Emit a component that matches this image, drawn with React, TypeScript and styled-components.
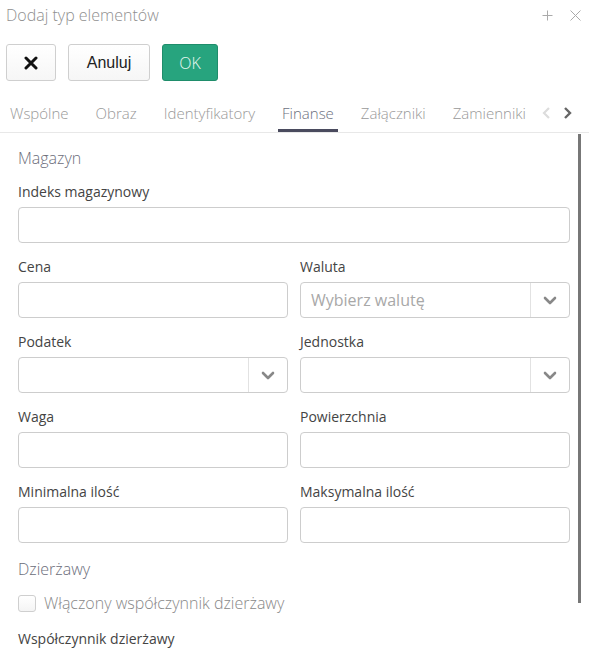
import React from "react";
import styled, { createGlobalStyle } from "styled-components";

const GlobalStyle = createGlobalStyle`
  html, body {
    margin: 0;
    padding: 0;
    background: #fff;
  }
  body {
    font-family: "Open Sans", "Liberation Sans", sans-serif;
  }
`;

const Page = styled.div`
  position: relative;
  width: 589px;
  height: 659px;
  overflow: hidden;
  background: #fff;
`;

const Header = styled.div`
  display: flex;
  align-items: center;
  justify-content: space-between;
  height: 30px;
  padding: 0 8px 0 6px;
`;

const Title = styled.div`
  font-size: 16px;
  font-weight: 300;
  color: #8f8f8f;
  line-height: 30px;
`;

const HeaderIcons = styled.div`
  display: flex;
  align-items: center;
  gap: 17px;
`;

const Toolbar = styled.div`
  display: flex;
  gap: 12px;
  padding: 14px 6px 0;
`;

const Button = styled.button<{ $primary?: boolean; $w: number }>`
  display: flex;
  align-items: center;
  justify-content: center;
  width: ${(p) => p.$w}px;
  height: 37px;
  padding: 0;
  border-radius: 3px;
  border: 1px solid ${(p) => (p.$primary ? "#1f8d6b" : "#cfcfcf")};
  background: ${(p) =>
    p.$primary ? "#27a47e" : "linear-gradient(#ffffff, #f6f6f6)"};
  color: ${(p) => (p.$primary ? "#e8f7f1" : "#222")};
  font-family: ${(p) =>
    p.$primary
      ? `"Open Sans", sans-serif`
      : `"Liberation Sans", Arial, sans-serif`};
  font-weight: ${(p) => (p.$primary ? 300 : 400)};
  font-size: 16px;
`;

const TabBar = styled.div`
  position: relative;
  display: flex;
  gap: 19px;
  margin-top: 14px;
  padding-left: 6px;
  border-bottom: 1px solid #e8e8e8;
  height: 37px;
  overflow: hidden;
  white-space: nowrap;
`;

const Tab = styled.div<{ $active?: boolean }>`
  box-sizing: border-box;
  padding: 8px 4px 0;
  height: 37px;
  line-height: 20px;
  font-size: 15px;
  font-weight: 300;
  color: ${(p) => (p.$active ? "#6c6f7e" : "#999")};
  border-bottom: 3px solid ${(p) => (p.$active ? "#4a4b5e" : "transparent")};
  flex-shrink: 0;
`;

const TabArrows = styled.div`
  position: absolute;
  right: 0;
  top: 0;
  height: 36px;
  width: 62px;
  display: flex;
  align-items: center;
  justify-content: flex-end;
  gap: 12px;
  padding-right: 17px;
  box-sizing: border-box;
  background: linear-gradient(
    to right,
    rgba(255, 255, 255, 0),
    #fff 10px,
    #fff
  );
`;

const Content = styled.div`
  padding: 14px 19px 0 18px;
`;

const SectionTitle = styled.div`
  font-size: 16px;
  font-weight: 300;
  color: #6b6d7a;
  line-height: 22px;
  margin-bottom: 13px;
`;

const Grid = styled.div`
  display: grid;
  grid-template-columns: 1fr 1fr;
  column-gap: 12px;
  row-gap: 14px;
`;

const Field = styled.div<{ $full?: boolean }>`
  display: flex;
  flex-direction: column;
  grid-column: ${(p) => (p.$full ? "1 / -1" : "auto")};
`;

const Label = styled.div`
  font-size: 14px;
  color: #444;
  line-height: 20px;
  margin-bottom: 5px;
`;

const Input = styled.div`
  height: 36px;
  box-sizing: border-box;
  border: 1px solid #cdcdcd;
  border-radius: 4px;
  background: #fff;
`;

const Select = styled(Input)`
  display: flex;
  align-items: center;
`;

const SelectValue = styled.div`
  flex: 1;
  padding-left: 10px;
  font-size: 16px;
  color: #a8a8a8;
`;

const SelectButton = styled.div`
  width: 38px;
  height: 100%;
  border-left: 1px solid #e2e2e2;
  display: flex;
  align-items: center;
  justify-content: center;
`;

const Section2 = styled(SectionTitle)`
  margin-top: 15px;
  margin-bottom: 12px;
`;

const CheckRow = styled.label`
  display: flex;
  align-items: center;
  gap: 8px;
  font-size: 16px;
  font-weight: 300;
  color: #888;
  line-height: 22px;
`;

const Box = styled.span`
  width: 16px;
  height: 15px;
  border: 1px solid #cfcfcf;
  border-radius: 3px;
  background: linear-gradient(#fff, #f4f4f4);
`;

const BottomLabel = styled(Label)`
  margin-top: 15px;
`;

const Scrollbar = styled.div`
  position: absolute;
  left: 578px;
  top: 134px;
  width: 3px;
  height: 469px;
  background: #777;
`;

const Chevron = () => (
  <svg width="14" height="9" viewBox="0 0 14 9">
    <polyline
      points="2,2 7,7 12,2"
      fill="none"
      stroke="#888"
      strokeWidth="2.6"
      strokeLinecap="round"
      strokeLinejoin="round"
    />
  </svg>
);

const Dropdown: React.FC<{ placeholder?: string }> = ({ placeholder }) => (
  <Select>
    <SelectValue>{placeholder}</SelectValue>
    <SelectButton>
      <Chevron />
    </SelectButton>
  </Select>
);

const tabs = [
  "Wspólne",
  "Obraz",
  "Identyfikatory",
  "Finanse",
  "Załączniki",
  "Zamienniki",
];

export default function App() {
  return (
    <Page>
      <GlobalStyle />
      <Header>
        <Title>Dodaj typ elementów</Title>
        <HeaderIcons>
          <svg width="11" height="11" viewBox="0 0 11 11">
            <path d="M5.5 0.5v10M0.5 5.5h10" stroke="#aaa" strokeWidth="1" />
          </svg>
          <svg width="11" height="11" viewBox="0 0 11 11">
            <path d="M0.5 0.5l10 10M10.5 0.5l-10 10" stroke="#aaa" strokeWidth="1" />
          </svg>
        </HeaderIcons>
      </Header>

      <Toolbar>
        <Button $w={50}>
          <svg width="14" height="14" viewBox="0 0 14 14">
            <path
              d="M2 2l10 10M12 2L2 12"
              stroke="#111"
              strokeWidth="3"
              strokeLinecap="round"
            />
          </svg>
        </Button>
        <Button $w={82}>Anuluj</Button>
        <Button $w={56} $primary>
          OK
        </Button>
      </Toolbar>

      <TabBar>
        {tabs.map((t) => (
          <Tab key={t} $active={t === "Finanse"}>
            {t}
          </Tab>
        ))}
        <TabArrows>
          <svg width="9" height="14" viewBox="0 0 9 14">
            <polyline
              points="7,2 2,7 7,12"
              fill="none"
              stroke="#dcdcdc"
              strokeWidth="2.2"
            />
          </svg>
          <svg width="9" height="14" viewBox="0 0 9 14">
            <polyline
              points="2,2 7,7 2,12"
              fill="none"
              stroke="#666"
              strokeWidth="2.4"
            />
          </svg>
        </TabArrows>
      </TabBar>

      <Content>
        <SectionTitle>Magazyn</SectionTitle>
        <Grid>
          <Field $full>
            <Label>Indeks magazynowy</Label>
            <Input />
          </Field>
          <Field>
            <Label>Cena</Label>
            <Input />
          </Field>
          <Field>
            <Label>Waluta</Label>
            <Dropdown placeholder="Wybierz walutę" />
          </Field>
          <Field>
            <Label>Podatek</Label>
            <Dropdown />
          </Field>
          <Field>
            <Label>Jednostka</Label>
            <Dropdown />
          </Field>
          <Field>
            <Label>Waga</Label>
            <Input />
          </Field>
          <Field>
            <Label>Powierzchnia</Label>
            <Input />
          </Field>
          <Field>
            <Label>Minimalna ilość</Label>
            <Input />
          </Field>
          <Field>
            <Label>Maksymalna ilość</Label>
            <Input />
          </Field>
        </Grid>

        <Section2>Dzierżawy</Section2>
        <CheckRow>
          <Box />
          Włączony współczynnik dzierżawy
        </CheckRow>
        <BottomLabel>Współczynnik dzierżawy</BottomLabel>
      </Content>

      <Scrollbar />
    </Page>
  );
}
